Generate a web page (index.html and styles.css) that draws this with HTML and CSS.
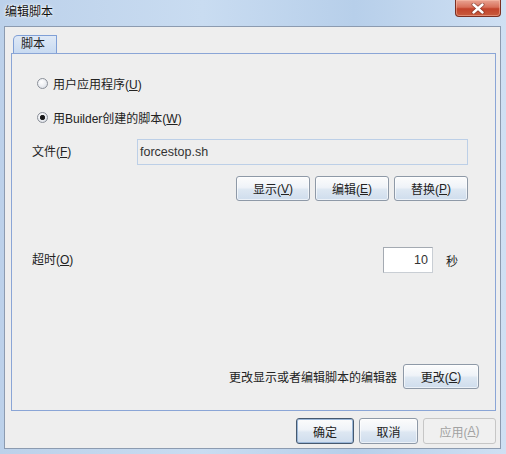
FILE: index.html
```html
<!DOCTYPE html>
<html lang="zh-CN">
<head>
<meta charset="utf-8">
<title>编辑脚本</title>
<link rel="stylesheet" href="styles.css">
</head>
<body>
<div class="frame">
  <div class="titlebar">
    <span class="title">编辑脚本</span>
    <span class="close">
      <svg width="14" height="11" viewBox="0 0 14 11">
        <path d="M2.5 1.5 L11.5 9.5 M11.5 1.5 L2.5 9.5" stroke="#5a2018" stroke-width="4" stroke-linecap="round" fill="none" opacity="0.55"/>
        <path d="M2.5 1.5 L11.5 9.5 M11.5 1.5 L2.5 9.5" stroke="#ffffff" stroke-width="2.4" stroke-linecap="round" fill="none"/>
      </svg>
    </span>
  </div>
  <div class="client">
    <div class="tabs"><div class="tab">脚本</div></div>
    <div class="panel">
      <div class="radio-row"><span class="radio"></span><span>用户应用程序(<u>U</u>)</span></div>
      <div class="radio-row second"><span class="radio checked"></span><span>用Builder创建的脚本(<u>W</u>)</span></div>
      <div class="field-row">
        <span class="label">文件(<u>F</u>)</span>
        <div class="textfield">forcestop.sh</div>
      </div>
      <div class="btn-row">
        <button class="btn w74">显示(<u>V</u>)</button>
        <button class="btn w74">编辑(<u>E</u>)</button>
        <button class="btn w74">替换(<u>P</u>)</button>
      </div>
      <div class="timeout-row">
        <span class="label grow">超时(<u>O</u>)</span>
        <div class="numfield">10</div>
        <span class="unit">秒</span>
      </div>
      <div class="change-row">
        <span class="change-text">更改显示或者编辑脚本的编辑器</span>
        <button class="btn w76">更改(<u>C</u>)</button>
      </div>
    </div>
    <div class="dialog-buttons">
      <button class="btn default w58">确定</button>
      <button class="btn w59">取消</button>
      <button class="btn disabled w73">应用(<u>A</u>)</button>
    </div>
  </div>
</div>
</body>
</html>
```
FILE: styles.css
```css
* { box-sizing: border-box; }
html, body { margin: 0; padding: 0; }
body {
  width: 506px;
  height: 454px;
  overflow: hidden;
  font-family: "Liberation Sans", "Noto Sans CJK SC", sans-serif;
  font-size: 12px;
  color: #222;
}
u { text-decoration: underline; text-underline-offset: 1px; }

.frame {
  width: 506px;
  height: 454px;
  display: flex;
  flex-direction: column;
  background: linear-gradient(to right, #bcd1ea 0%, #c9dcf1 40%, #b7cfea 70%, #cfe0f3 100%);
}

.titlebar {
  height: 26px;
  flex: none;
  display: flex;
  align-items: flex-start;
  padding-left: 5px;
}
.title {
  margin-top: 3px;
  line-height: 16px;
  font-family: "Noto Sans CJK SC", sans-serif;
  font-size: 12px;
  color: #111;
  text-shadow: 0 0 4px #ffffff, 0 0 2px #ffffff;
}
.close {
  margin-left: auto;
  margin-right: 5px;
  width: 46px;
  height: 17px;
  border: 1px solid #7a2f22;
  border-top: none;
  border-radius: 0 0 4px 4px;
  background: linear-gradient(to bottom, #e9a493 0%, #d8705a 45%, #c2432b 55%, #c85c3e 100%);
  box-shadow: inset 0 0 0 1px rgba(255, 200, 180, 0.45);
  display: flex;
  align-items: center;
  justify-content: center;
}

.client {
  margin-left: 4px;
  width: 497px;
  height: 423px;
  border: 1px solid #8c9bb0;
  background: #eeeeee;
  padding: 8px 4px 4px 6px;
  display: flex;
  flex-direction: column;
}

.tabs {
  height: 18px;
  flex: none;
  display: flex;
  padding-left: 2px;
}
.tab {
  width: 44px;
  height: 18px;
  border: 1px solid #7f9fd6;
  border-bottom: none;
  border-top-left-radius: 5px;
  border-top-right-radius: 1px;
  background: linear-gradient(to bottom, #dfe9f6, #c8daf1);
  padding-left: 7px;
  line-height: 17px;
  color: #222;
}

.panel {
  flex: 1;
  border: 1px solid #8aa5d6;
  display: flex;
  flex-direction: column;
  padding: 19px 0 21px 20px;
}

.radio-row {
  height: 20px;
  display: flex;
  align-items: center;
  padding-left: 5px;
  gap: 5px;
}
.radio-row.second { margin-top: 14px; }
.radio {
  width: 11px;
  height: 11px;
  border-radius: 50%;
  border: 1px solid #8b9099;
  background: radial-gradient(circle at 40% 35%, #ffffff 0, #eceef2 50%, #cfd5de 100%);
}
.radio.checked {
  background:
    radial-gradient(circle at 50% 50%, #111111 0, #222222 2.2px, rgba(0,0,0,0) 3px),
    radial-gradient(circle at 40% 35%, #ffffff 0, #eceef2 50%, #cfd5de 100%);
}

.field-row {
  margin-top: 12px;
  height: 26px;
  display: grid;
  grid-template-columns: 105px 331px;
  align-items: center;
}
.label { line-height: 16px; }
.textfield {
  height: 26px;
  border: 1px solid #bccfe7;
  background: #eeeeee;
  padding-left: 2px;
  line-height: 24px;
  font-size: 12.5px;
  color: #333;
}

.btn-row {
  margin-top: 11px;
  height: 25px;
  display: flex;
  justify-content: flex-end;
  gap: 5px;
  padding-right: 27px;
}

.btn {
  height: 25px;
  padding: 0;
  border: 1px solid #8e99a7;
  border-radius: 3px;
  background: linear-gradient(to bottom, #fcfcfc 0%, #eff3f8 45%, #dde7f2 55%, #cfdded 100%);
  box-shadow: inset 0 0 0 1px rgba(255, 255, 255, 0.6);
  font-family: "Liberation Sans", "Noto Sans CJK SC", sans-serif;
  font-size: 12px;
  color: #222;
  display: flex;
  align-items: center;
  justify-content: center;
}
.btn.default {
  border-color: #46596f;
  box-shadow: inset 0 0 0 1px #9bb7d8;
}
.btn.disabled {
  background: #f0f0f0;
  border-color: #c6c6c6;
  box-shadow: none;
  color: #a2a2a2;
}
.w58 { width: 58px; }
.w59 { width: 59px; }
.w73 { width: 73px; }
.w74 { width: 74px; }
.w76 { width: 76px; }

.timeout-row {
  margin-top: 46px;
  height: 26px;
  display: flex;
  align-items: center;
  padding-right: 37px;
}
.grow { flex: 1; }
.numfield {
  width: 50px;
  height: 26px;
  border: 1px solid #a4aab2;
  border-right-color: #c9ced4;
  border-bottom-color: #c9ced4;
  background: #ffffff;
  text-align: right;
  padding-right: 4px;
  line-height: 24px;
  font-size: 12.5px;
  color: #333;
}
.unit { margin-left: 13px; }

.change-row {
  margin-top: auto;
  height: 25px;
  display: flex;
  justify-content: flex-end;
  align-items: center;
  padding-right: 16px;
}
.change-text { margin-right: 6px; }

.dialog-buttons {
  margin-top: 7px;
  height: 26px;
  flex: none;
  display: flex;
  justify-content: flex-end;
  gap: 5px;
}
.dialog-buttons .btn { height: 26px; }
```
